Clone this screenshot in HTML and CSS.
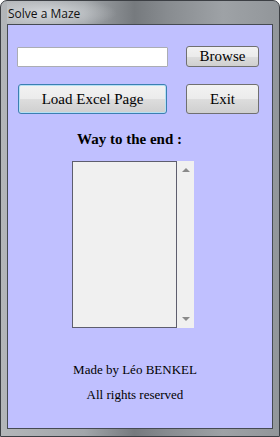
FILE: index.html
```html
<!DOCTYPE html>
<html lang="fr">

<head>
    <meta charset="UTF-8">
    <meta name="viewport" content="width=device-width, initial-scale=1.0">
    <title>Solve a Maze</title>
    <link rel="stylesheet" href="styles.css">
</head>

<body>
    <div class="window">
        <div class="titlebar">Solve a Maze</div>
        <div class="client">
            <div class="row row-top">
                <input type="text" class="path-box">
                <button class="btn btn-small">Browse</button>
            </div>
            <div class="row row-actions">
                <button class="btn btn-big btn-default">Load Excel Page</button>
                <button class="btn btn-big">Exit</button>
            </div>
            <h2 class="heading">Way to the end :</h2>
            <div class="listbox">
                <div class="list-area"></div>
                <div class="scrollbar">
                    <span class="arrow arrow-up"></span>
                    <span class="arrow arrow-down"></span>
                </div>
            </div>
            <div class="footer">
                <p>Made by Léo BENKEL</p>
                <p>All rights reserved</p>
            </div>
        </div>
    </div>
</body>

</html>
```

FILE: styles.css
```css
html, body {
    margin: 0;
    padding: 0;
    background: #ffffff;
}
.window {
    width: 280px;
    height: 437px;
    box-sizing: border-box;
    border: 1px solid #3c3f44;
    border-radius: 7px 7px 0 0;
    padding: 0 6px 7px 6px;
    display: flex;
    flex-direction: column;
    background: linear-gradient(90deg, #b3b6b9 0%, #a2a6aa 30%, #767a7e 48%, #888c90 60%, #9ea2a6 80%, #92969a 100%);
}
.titlebar {
    height: 23px;
    box-sizing: border-box;
    padding: 4px 0 0 1px;
    font-family: "Open Sans", "DejaVu Sans", sans-serif;
    font-size: 12px;
    color: #111111;
    background: radial-gradient(ellipse 70px 16px at 40px 12px, rgba(220, 223, 226, 0.85), rgba(220, 223, 226, 0));
}
.client {
    flex: 1;
    border: 1px solid #454a52;
    background: #c0c0ff;
    display: flex;
    flex-direction: column;
    align-items: flex-start;
    padding: 0 13px 0 9px;
    font-family: "Liberation Serif", "Times New Roman", serif;
}
.row {
    width: 100%;
    display: flex;
    justify-content: space-between;
    align-items: center;
}
.row-top {
    margin-top: 21px;
}
.row-actions {
    margin-top: 17px;
    padding-left: 1px;
    box-sizing: border-box;
}
.path-box {
    width: 151px;
    height: 20px;
    box-sizing: border-box;
    margin: 0;
    border: 1px solid #abadb3;
    border-radius: 1px;
    background: #ffffff;
}
.btn {
    width: 73px;
    box-sizing: border-box;
    border: 1px solid #707070;
    border-radius: 3px;
    font-family: "Liberation Serif", "Times New Roman", serif;
    font-size: 15px;
    color: #000000;
    padding: 0;
    background: linear-gradient(#f2f2f2 0%, #ebebeb 50%, #dddddd 51%, #cfcfcf 100%);
}
.btn-small {
    height: 21px;
    line-height: 17px;
}
.btn-big {
    height: 30px;
}
.btn-default {
    width: 149px;
    border-color: #3c7fb1;
    box-shadow: inset 0 0 0 1px #b4e0f4;
}
.heading {
    margin: 17px 0 0 60px;
    font-size: 15px;
    font-weight: bold;
    line-height: 17px;
    color: #000000;
}
.listbox {
    margin: 13px 0 0 55px;
    display: flex;
    height: 167px;
}
.list-area {
    width: 105px;
    box-sizing: border-box;
    border: 1px solid #5e5e6e;
    background: #f0f0f0;
}
.scrollbar {
    width: 17px;
    background: #f0f0f0;
    display: flex;
    flex-direction: column;
    justify-content: space-between;
    align-items: center;
    padding: 7px 0 7px 0;
    box-sizing: border-box;
}
.arrow {
    width: 0;
    height: 0;
    border-left: 4px solid transparent;
    border-right: 4px solid transparent;
}
.arrow-up {
    border-bottom: 4px solid #8a8a8a;
}
.arrow-down {
    border-top: 4px solid #8a8a8a;
}
.footer {
    width: 100%;
    margin-top: 34px;
    padding-right: 6px;
    box-sizing: border-box;
    text-align: center;
    font-size: 13px;
    color: #000000;
}
.footer p {
    margin: 0 0 10px 0;
    line-height: 15px;
}
```
